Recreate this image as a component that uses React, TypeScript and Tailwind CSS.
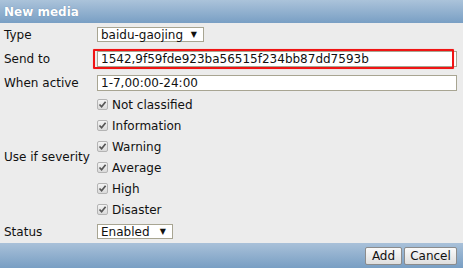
import React from 'react';

const severities = ['Not classified', 'Information', 'Warning', 'Average', 'High', 'Disaster'];

function Check() {
  return (
    <span className="flex h-[11px] w-[11px] items-center justify-center rounded-[2px] border border-[#b4b4b4] bg-gradient-to-b from-[#f4f4f4] to-[#dadada]">
      <svg width="9" height="9" viewBox="0 0 9 9">
        <path d="M1.5 4.5 L3.6 6.8 L7.6 1.8" fill="none" stroke="#555" strokeWidth="1.7" />
      </svg>
    </span>
  );
}

function Select({ value, width }: { value: string; width: string }) {
  return (
    <div className={`flex h-[15px] items-center justify-between whitespace-nowrap border border-[#a8a592] bg-white pl-[3px] pr-[6px] leading-none ${width}`}>
      <span>{value}</span>
      <span className="text-[8px]">▼</span>
    </div>
  );
}

export default function App() {
  return (
    <div className="flex h-[268px] w-[463px] flex-col bg-[#ececec] text-[12px] text-[#111]" style={{ fontFamily: '"DejaVu Sans", Verdana, sans-serif' }}>
      <div className="flex h-[23px] items-center bg-gradient-to-b from-[#abc3da] to-[#799fc4] px-[4px] text-[12px] font-bold text-white [text-shadow:0_0_1px_#5b7fa5]">
        New media
      </div>

      <div className="flex h-[23px] items-center">
        <div className="w-[97px] pl-[4px]">Type</div>
        <Select value="baidu-gaojing" width="w-[107px]" />
      </div>

      <div className="flex h-[25px] items-center">
        <div className="w-[97px] pl-[4px]">Send to</div>
        <div className="relative flex h-[16px] w-[360px] items-center border border-[#a8a592] bg-white pl-[3px] leading-none">
          1542,9f59fde923ba56515f234bb87dd7593b
          <div className="absolute left-[-5px] top-[-3px] h-[20px] w-[361px] rounded-[1px] border-[2px] border-[#f01414] shadow-[0_0_1px_#ff8080]" />
        </div>
      </div>

      <div className="flex h-[23px] items-center">
        <div className="w-[97px] pl-[4px]">When active</div>
        <div className="flex h-[16px] w-[360px] items-center border border-[#a8a592] bg-white pl-[3px] leading-none">
          1-7,00:00-24:00
        </div>
      </div>

      <div className="flex h-[126px] items-center">
        <div className="w-[97px] pl-[4px]">Use if severity</div>
        <div className="flex flex-col">
          {severities.map((s) => (
            <div key={s} className="flex h-[21px] items-center gap-[4px]">
              <Check />
              <span>{s}</span>
            </div>
          ))}
        </div>
      </div>

      <div className="flex h-[23px] items-center">
        <div className="w-[97px] pl-[4px]">Status</div>
        <Select value="Enabled" width="w-[76px]" />
      </div>

      <div className="flex h-[25px] items-end justify-end gap-[2px] bg-gradient-to-b from-[#a9c1d9] to-[#789ec3] pb-[3px] pr-[6px]">
        <button className="h-[18px] w-[37px] rounded-[2px] border border-[#8c8c8c] bg-gradient-to-b from-[#fafafa] to-[#dedede] leading-none">Add</button>
        <button className="h-[18px] w-[53px] rounded-[2px] border border-[#8c8c8c] bg-gradient-to-b from-[#fafafa] to-[#dedede] leading-none">Cancel</button>
      </div>
    </div>
  );
}
